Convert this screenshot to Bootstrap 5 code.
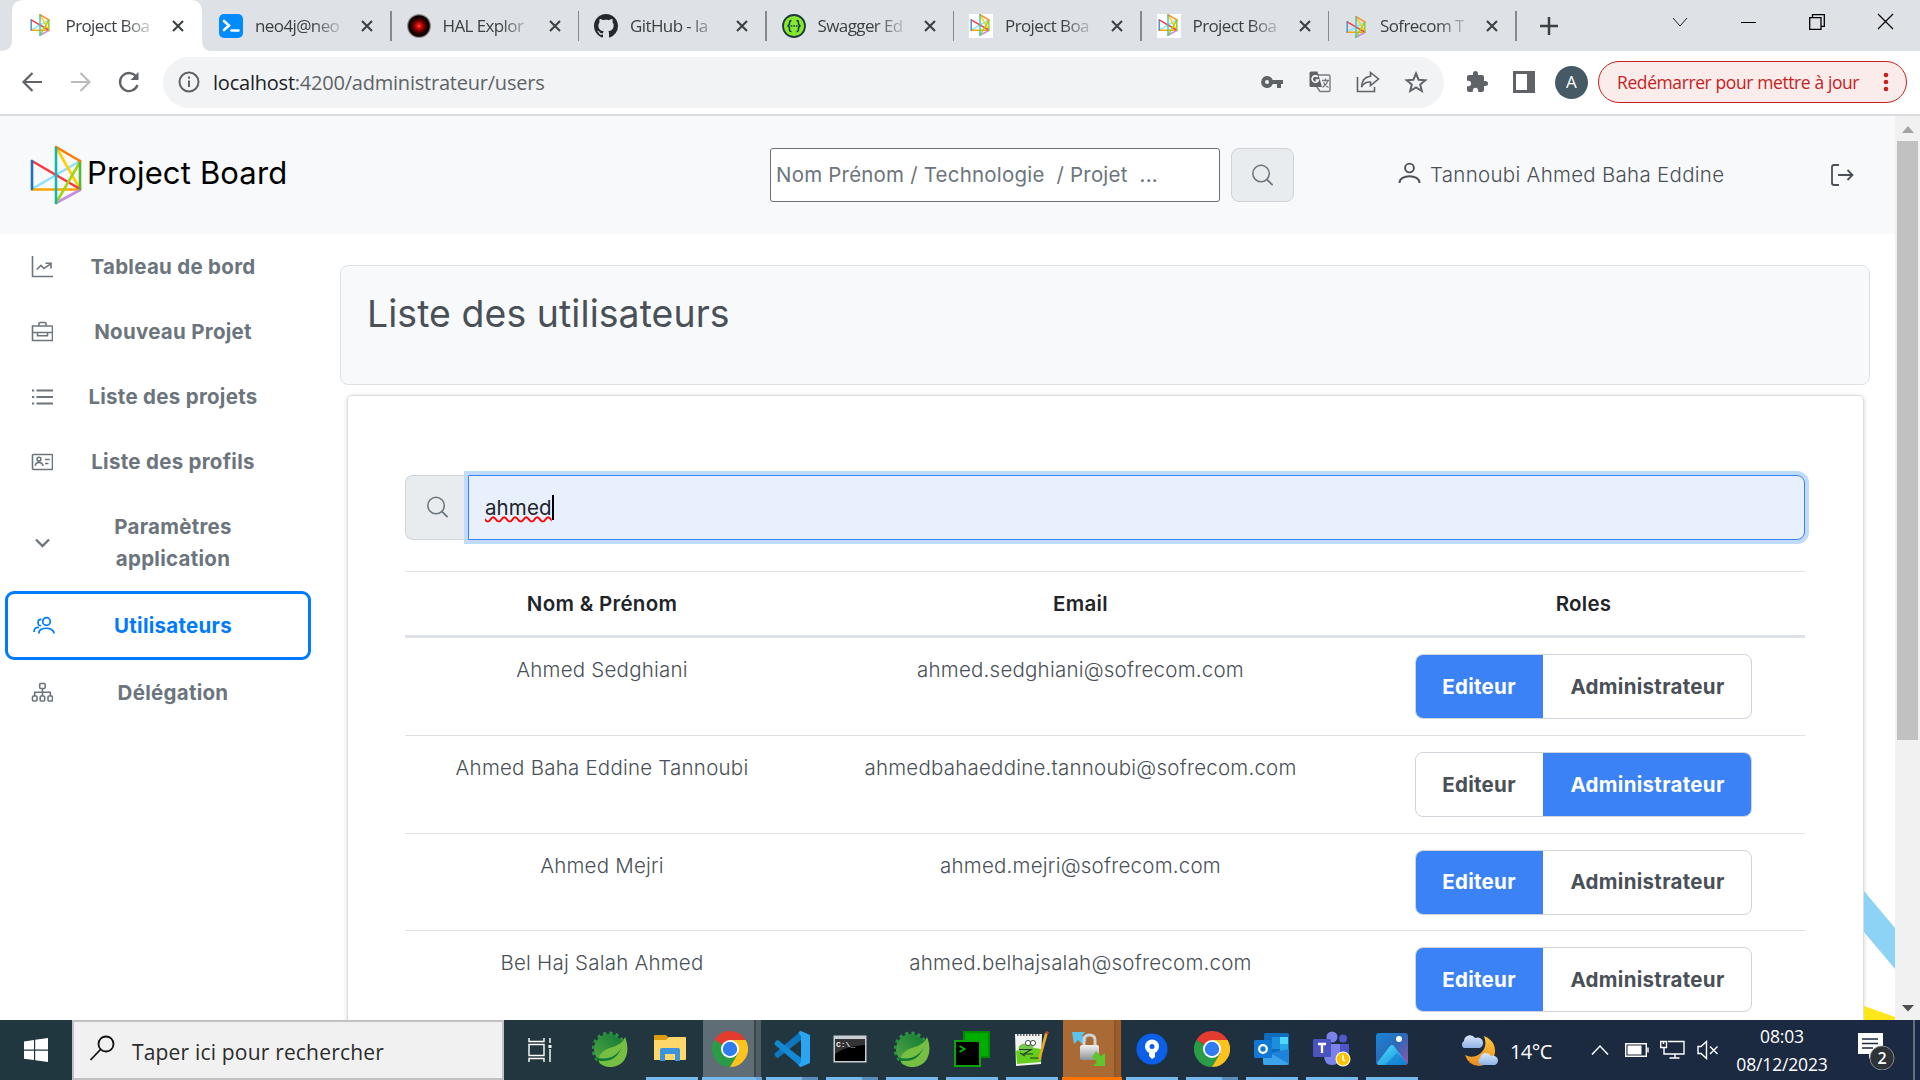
<!DOCTYPE html>
<html lang="fr">
<head>
<meta charset="utf-8">
<title>Project Board</title>
<link rel="stylesheet" href="https://cdn.jsdelivr.net/npm/bootstrap@5.3.0/dist/css/bootstrap.min.css">
<style>
html,body{width:1920px;height:1080px;overflow:hidden}
body{font-family:Inter,"Liberation Sans",sans-serif;font-size:20.5px;letter-spacing:.28px;line-height:32px;color:#212529;background:#fff}
svg{display:block;flex:none}
.sys{font-family:"Open Sans","Noto Sans",sans-serif}
/* browser chrome */
.tabstrip{height:51px;background:#dee1e6;padding-left:15.5px}
.tab-item{width:187.5px;height:51px;padding-left:16px;font-size:17px;letter-spacing:-.6px;color:#3c4043;position:relative}
.tab-item .fav{width:24px;margin-right:12px}
.tab-item .lbl{width:88px;white-space:nowrap;-webkit-mask-image:linear-gradient(90deg,#000 65%,rgba(0,0,0,.12));mask-image:linear-gradient(90deg,#000 65%,rgba(0,0,0,.12))}
.tab-item .x{margin-left:18px}
.tab-item.front{padding-left:12px}
.tab-item.front .fav{margin-right:14px}
.tab-item.sep::after{content:"";position:absolute;right:-1px;top:11px;width:1.5px;height:30px;background:#868a8f}
.tab-item>*{position:relative}
.tab-shape{position:absolute!important;left:-16px;top:0}
.winctl{padding-right:26px;gap:52px;height:43px}
.toolbar-row{height:65px;border-bottom:2px solid #dadce0;padding:6px 11px 7px 20px;background:#fff}
.omni{width:1281px;height:51px;margin-left:21px;border-radius:26px;background:#f1f3f4;padding:0 16px 0 15px;font-size:20px;letter-spacing:-.22px;color:#5f6368}
.omni b{font-weight:400;color:#202124}
.omni .addr{margin-left:13px;padding-top:2px}
.avatar-a{width:33px;height:33px;background:#455a64;color:#fff;font-size:17px;margin-left:20px}
.update-pill{width:309px;height:42px;border:1.5px solid #c5221f;border-radius:21px;background:#faeceb;color:#c5221f;font-size:17.5px;letter-spacing:-.4px;margin-left:10px;padding:0 17px 0 18px;white-space:nowrap}
/* application */
.viewport-area{height:904px;overflow:hidden}
.app-body{width:1895px;height:904px;overflow:hidden;position:relative}
.app-head{height:118px;background:#f8f9fb;padding-left:29px;color:#495057}
.brand-name{font-size:31px;color:#000;letter-spacing:.15px;margin-left:4px;width:200px;white-space:nowrap;margin-top:-5px}
.head-input{width:450px;height:54px;border:1px solid #6d6f75;border-radius:3px;font-size:20.5px;letter-spacing:.2px;color:#6c757d;padding:0 5px 1px;background:#fff;margin-left:483px;outline:0}
.head-input::placeholder{color:#6c757d;opacity:1}
.head-btn{width:63px;height:54px;background:#e9ecef;border:1px solid #ced4da;border-radius:8px;margin-left:11px;padding:0}
.side{width:340px;padding-top:1px;font-weight:700;color:#6c757d;line-height:32px}
.side-item{padding:16px 0 17px 31px;min-height:65px}
.side-item .t{width:190px;margin-left:25px;text-align:center}
.side-item.on{border:3px solid #007bff;border-radius:9px;margin:-1px 29px 1px 5px;padding:16px 0 15px 25px;min-height:69px;color:#007bff}
.side-item.on .t{margin-left:23px;margin-right:2px}
.panel-title{width:1530px;height:120px;margin-top:31px;background:#f8f9fb;border:1px solid #dee2e6;border-radius:8px;padding:30px 26px;font-size:37.4px;letter-spacing:.08px;line-height:36px;color:#495057}
.panel-card{width:1517px;height:760px;margin:10px 0 0 7px;border:1px solid #dcdee0;border-radius:5px;background:#fff;box-shadow:0 1px 5px rgba(0,0,0,.16);padding:79px 58px 0 57px}
.find-icon{width:63px;height:65px;background:#e9ecef;border:1px solid #ced4da;border-right:0;border-radius:8px 0 0 8px;padding-left:20px}
.find-box{height:65px;border:1px solid #3b82f6;border-radius:0 8px 8px 0;background:#e8f0fe;box-shadow:0 0 0 4px #bfdbfe;padding-left:16px;color:#212529}
.find-box .word{letter-spacing:.1px;text-decoration:underline wavy #f00 1.5px;text-underline-offset:1px;text-decoration-skip-ink:none}
.caret{width:2px;height:25px;background:#000}
.users{width:1400px;margin-top:31px;border-top:1px solid #dee2e6;table-layout:fixed;text-align:center}
.users thead th{height:65px;padding:0;border-bottom:3px solid #dee2e6;font-weight:600;color:#212529;vertical-align:middle}
.users td{height:97.5px;padding:16px 0 0;border-bottom:1px solid #dee2e6;vertical-align:top;color:#495057;letter-spacing:.22px}
.users tbody tr:first-child td{height:99px}
.users td,.user-name{font-weight:350}
.roles{width:337px;height:65px;margin:0 auto;border-radius:8px;overflow:hidden;border:1px solid #ced4da;font-weight:700;letter-spacing:.3px;color:#495057}
.roles span{display:flex;align-items:center;justify-content:center;height:65px;margin-top:-1px}
.roles .e{width:128px;margin-left:-1px}.roles .a{flex:1;margin-right:-1px}
.roles .sel{background:#3b82f6;color:#fff}
.deco{position:absolute;right:0;bottom:0}
.scroller{width:25px;background:#f1f1f1;padding-top:10px}
.scroller .thumb{width:21px;height:599px;background:#c1c1c1;margin-top:8px}
/* taskbar */
.taskbar-os{height:60px;background:linear-gradient(90deg,#213740,#22363f 50%,#1c2b3f 75%,#1b2942);color:#fff;letter-spacing:0}
.os-search{width:432px;height:60px;background:#f1f1f1;border:2px solid #c2c2c2;padding-left:15px;font-size:21px;letter-spacing:.18px;color:#2b2b2b}
.slot{width:60px;height:60px;border-bottom:3px solid transparent;background-clip:padding-box}
.slot.run{border-image:linear-gradient(90deg,transparent 7px,#76b9ed 7px 53px,transparent 53px) 3;border-image-width:0 0 3px 0}
.slot.many{border-image:linear-gradient(90deg,transparent 7px,#76b9ed 7px 39px,#5a8fbd 39px 53px,transparent 53px) 3;border-image-width:0 0 3px 0}
.slot.act{background:linear-gradient(90deg,transparent 1px,#5f6d76 1px 52px,#3a474f 52px 54px,#505d66 54px 59px,transparent 59px);border-image:linear-gradient(90deg,transparent 1px,#76b9ed 1px 52px,#6aa5d6 52px 59px,transparent 59px) 3;border-image-width:0 0 3px 0}
.slot.warn{background:linear-gradient(90deg,transparent 1px,#a96a35 1px 52px,#8e5526 52px 54px,#9c5d2a 54px 59px,transparent 59px);border-image:linear-gradient(90deg,transparent 1px,#ff7300 1px 59px,transparent 59px) 3;border-image-width:0 0 3px 0}
.slot.shift{position:relative;left:-1px}
.clock{width:96px;font-size:17.5px;letter-spacing:-.15px;line-height:28px;text-align:center;white-space:nowrap}
.temp{font-size:20px;letter-spacing:-.6px;width:42px;margin-left:12px;padding-top:3px}
</style>
<script src="https://cdn.jsdelivr.net/npm/bootstrap@5.3.0/dist/js/bootstrap.bundle.min.js"></script>
</head>
<body>
<svg width="0" height="0" class="position-absolute">
<defs>
<linearGradient id="gSpring" x1="0" y1="1" x2="1" y2="0"><stop offset="0" stop-color="#5aa845"/><stop offset="1" stop-color="#0b7a33"/></linearGradient>
<linearGradient id="gPhoto" x1="0" y1="0" x2="1" y2="1"><stop offset="0" stop-color="#1687d9"/><stop offset=".5" stop-color="#2d69b8"/><stop offset="1" stop-color="#9a52a8"/></linearGradient>
<linearGradient id="gMount" x1="0" y1="0" x2="1" y2="1"><stop offset="0" stop-color="#4fe0ff"/><stop offset="1" stop-color="#1386d8"/></linearGradient>
<linearGradient id="gMoon" x1="0" y1="0" x2="0" y2="1"><stop offset="0" stop-color="#ffc93c"/><stop offset="1" stop-color="#e88a22"/></linearGradient>
<linearGradient id="gCloud" x1="0" y1="0" x2="0" y2="1"><stop offset="0" stop-color="#dbe8fa"/><stop offset="1" stop-color="#8fb2e6"/></linearGradient>
<radialGradient id="gHal"><stop offset="0" stop-color="#ff7a30"/><stop offset=".15" stop-color="#f01010"/><stop offset=".5" stop-color="#6a0000"/><stop offset=".8" stop-color="#100"/></radialGradient>
<linearGradient id="gLock" x1="0" y1="0" x2="0" y2="1"><stop offset="0" stop-color="#f2f2f2"/><stop offset="1" stop-color="#8d9296"/></linearGradient>
<symbol id="logo" viewBox="0 0 54 60"><g fill="none" stroke-width="2.6" stroke-linecap="round"><path stroke="#8ee0fb" d="M3 44 51 16"/><path stroke="#ffd000" d="M27 2 51 44"/><path stroke="#ffa400" d="M3 44.500H51"/><path stroke="#fb3640" d="M3 16 51 44"/><path stroke="#c78ce6" d="M27 58 51 45"/><path stroke="#a3d311" d="M27 58 51 17"/><path stroke="#56b82c" d="M51 16V44"/><path stroke="#ff7a00" d="M27 2 51 16"/><path stroke="#12b8ac" d="M27 3V58"/><path stroke="#1d70b7" d="M3 16V44"/></g></symbol>
<symbol id="logoS" viewBox="0 0 54 60"><g fill="none" stroke-width="4" stroke-linecap="round"><path stroke="#8ee0fb" d="M3 44 51 16"/><path stroke="#ffd000" d="M27 2 51 44"/><path stroke="#ffa400" d="M3 44.500H51"/><path stroke="#fb3640" d="M3 16 51 44"/><path stroke="#c78ce6" d="M27 58 51 45"/><path stroke="#a3d311" d="M27 58 51 17"/><path stroke="#8cc83c" d="M51 16V44"/><path stroke="#ff8a2a" d="M27 2 51 16"/><path stroke="#3cc8b0" d="M27 3V58"/><path stroke="#4a90cc" d="M3 16V44"/></g></symbol>
<symbol id="xx" viewBox="0 0 12 12"><path d="M1 1 11 11M11 1 1 11" stroke="#3c4043" stroke-width="2.1"/></symbol>
<symbol id="mag" viewBox="0 0 24 24"><circle cx="10.500" cy="10" r="8.600" fill="none" stroke="#6c757d" stroke-width="1.600"/><path d="M16.700 16.200 22 21.500" stroke="#6c757d" stroke-width="1.900" stroke-linecap="round"/></symbol>
<symbol id="spring" viewBox="0 0 36 36"><circle cx="17" cy="18" r="15" fill="url(#gSpring)"/><circle cx="17" cy="18" r="15.800" fill="none" stroke="#2c9440" stroke-width="3.200" stroke-dasharray="3.100 3.100"/><path d="M33 6C38 18 36 34 20 36 14 36.500 9 34 7 31 5 23 13 18 21 16 27 14 31 11 33 6Z" fill="#77bf43"/><path d="M3 26C14 30 26 26 30 15 27 25 20 31 9 30 6 30 4 28 3 26Z" fill="#0d7a34"/></symbol>
<symbol id="chrome" viewBox="0 0 36 36"><path d="M18 18 2.400 9A18 18 0 0 1 33.600 9Z" fill="#e33b2e"/><path d="M18 18 2.400 9A18 18 0 0 0 18 36L26 22.500Z" fill="#2a9c48"/><path d="M18 9H33.600A18 18 0 0 1 18 36L26 22.500Z" fill="#fcc31e"/><circle cx="18" cy="18" r="9" fill="#fff"/><circle cx="18" cy="18" r="7.200" fill="#2f7bf0"/></symbol>
</defs>
</svg>

<header class="sys">
 <div class="tabstrip d-flex">
  <div class="tab-item front d-flex align-items-center">
   <svg class="tab-shape" width="210" height="51"><path d="M0 51C9 51 12 47 12 39V12C12 4 16 0 24 0H190C198 0 202 4 202 12V39C202 47 205 51 212 51Z" fill="#fff"/></svg>
   <svg class="fav" height="24"><use href="#logoS" height="22"/></svg><span class="lbl">Project Boa</span><svg class="x" width="12" height="12"><use href="#xx"/></svg></div>
  <div class="tab-item sep d-flex align-items-center"><svg class="fav" width="24" height="24" viewBox="0 0 24 24"><rect width="24" height="24" rx="5" fill="#018bff"/><path d="M5 7 10 11.500 5 16M12.500 16.500H19.500" fill="none" stroke="#fff" stroke-width="2.600" stroke-linecap="round"/></svg><span class="lbl">neo4j@neo</span><svg class="x" width="12" height="12"><use href="#xx"/></svg></div>
  <div class="tab-item sep d-flex align-items-center"><svg class="fav" width="24" height="24"><circle cx="12" cy="12" r="12" fill="#8c8c8c"/><circle cx="12" cy="12" r="10.800" fill="url(#gHal)"/></svg><span class="lbl">HAL Explor</span><svg class="x" width="12" height="12"><use href="#xx"/></svg></div>
  <div class="tab-item sep d-flex align-items-center"><svg class="fav" width="24" height="24" viewBox="0 0 16 16"><path fill="#24292f" d="M8 0C3.580 0 0 3.580 0 8c0 3.540 2.290 6.530 5.470 7.590.4.070.55-.17.55-.38 0-.19-.01-.82-.01-1.490-2.010.37-2.530-.49-2.690-.94-.09-.23-.48-.94-.82-1.130-.28-.15-.68-.52-.01-.53.63-.01 1.080.58 1.230.82.72 1.210 1.870.87 2.330.66.070-.52.28-.87.51-1.070-1.780-.2-3.640-.89-3.640-3.950 0-.87.31-1.590.82-2.150-.08-.2-.36-1.020.08-2.120 0 0 .67-.21 2.200.82.64-.18 1.320-.27 2-.27s1.360.09 2 .27c1.530-1.040 2.200-.82 2.200-.82.44 1.100.16 1.920.08 2.120.51.56.82 1.270.82 2.150 0 3.070-1.870 3.750-3.650 3.950.29.25.54.73.54 1.480 0 1.070-.01 1.930-.01 2.200 0 .21.15.46.55.38A8 8 0 0 0 16 8c0-4.420-3.580-8-8-8"/></svg><span class="lbl">GitHub - la</span><svg class="x" width="12" height="12"><use href="#xx"/></svg></div>
  <div class="tab-item sep d-flex align-items-center"><svg class="fav" width="24" height="24"><circle cx="12" cy="12" r="11" fill="#85ea2d" stroke="#1d3a3f" stroke-width="1.800"/><path d="M9.500 6.500Q7.500 6.500 7.500 9T5.500 12Q7.500 12 7.500 15T9.500 17.500M14.500 6.500Q16.500 6.500 16.500 9T18.500 12Q16.500 12 16.500 15T14.500 17.500" fill="none" stroke="#173647" stroke-width="1.500"/><path d="M8.700 12H15.500" stroke="#173647" stroke-width="1.600" stroke-dasharray="1.600 1"/></svg><span class="lbl">Swagger Ed</span><svg class="x" width="12" height="12"><use href="#xx"/></svg></div>
  <div class="tab-item sep d-flex align-items-center"><svg class="fav bg-white" height="24"><use href="#logoS" x="-1" height="22"/></svg><span class="lbl">Project Boa</span><svg class="x" width="12" height="12"><use href="#xx"/></svg></div>
  <div class="tab-item sep d-flex align-items-center"><svg class="fav bg-white" height="24"><use href="#logoS" x="-1" height="22"/></svg><span class="lbl">Project Boa</span><svg class="x" width="12" height="12"><use href="#xx"/></svg></div>
  <div class="tab-item sep d-flex align-items-center"><svg class="fav" height="24"><use href="#logoS" y="2" height="22"/></svg><span class="lbl">Sofrecom T</span><svg class="x" width="12" height="12"><use href="#xx"/></svg></div>
  <svg class="align-self-center ms-4" width="18" height="18" viewBox="0 0 18 18"><path d="M9 0V18M0 9H18" stroke="#3c4043" stroke-width="2.500"/></svg>
  <div class="winctl d-flex align-items-center ms-auto">
   <svg width="16" height="16" fill="none" stroke="#222"><path d="M0 4 7 12 14 4"/></svg>
   <svg width="16" height="16" stroke="#000"><path d="M0 8.500H15"/></svg>
   <svg width="16" height="16" fill="none" stroke="#000" stroke-width="1.300"><path d="M.7 3.700H12V15.300H.7ZM3.500 3.500V.7H15.300V12.300H12.500"/></svg>
   <svg width="17" height="17" stroke="#000" stroke-width="1.200"><path d="M1 1 16 16M16 1 1 16"/></svg>
  </div>
 </div>
 <div class="toolbar-row d-flex align-items-center">
  <div class="d-flex align-items-center" style="gap:25px">
   <svg width="24" height="24" fill="none" stroke="#5f6368" stroke-width="2.200"><path d="M22 12H4M12.500 3 3.500 12 12.500 21"/></svg>
   <svg width="24" height="24" fill="none" stroke="#babcbe" stroke-width="2.200"><path d="M2 12H20M11.500 3 20.500 12 11.500 21"/></svg>
   <svg width="24" height="24" fill="none" stroke="#5f6368" stroke-width="2.300"><path d="M18.500 7A9 9 0 1 0 19.500 15"/><path d="M20.500 2V10H12.500Z" fill="#5f6368" stroke="none"/></svg>
  </div>
  <div class="omni d-flex align-items-center">
   <svg width="22" height="22" fill="none" stroke="#5f6368" stroke-width="2"><circle cx="11" cy="11" r="9.500"/><path d="M11 9.500V16M11 5.500V7.800"/></svg>
   <span class="addr text-nowrap"><b>localhost</b>:4200/administrateur/users</span>
   <div class="ms-auto d-flex align-items-center" style="gap:24px">
    <svg width="24" height="24" viewBox="0 0 24 24" fill="#5f6368"><path fill-rule="evenodd" d="M12.700 10A6 6 0 1 0 12.700 14H17V18H21V14H23V10ZM7 14A2 2 0 1 1 7 10 2 2 0 0 1 7 14Z"/></svg>
    <svg width="24" height="24"><path d="M9 5H20.500Q22 5 22 6.500V20Q22 21.500 20.500 21.500H12L9 17" fill="none" stroke="#777b7f" stroke-width="1.400"/><path d="M3 1.500H9.500L14 17H3Q1.500 17 1.500 15.500V3Q1.500 1.500 3 1.500Z" fill="#5f6368"/><path d="M9.800 7A3.200 3.200 0 1 0 10.400 10H7.600" fill="none" stroke="#fff" stroke-width="1.600"/><path d="M14 10.500H21M17.500 8.500V10.500M20 10.500Q18.500 15 14.500 17.500M15.500 12.500Q17 15.500 20.500 17.500" fill="none" stroke="#777b7f" stroke-width="1.300"/></svg>
    <svg width="24" height="24" fill="none" stroke="#5f6368" stroke-width="1.600"><path d="M1.500 7V21.500H18.500V17"/><path d="M14.500 2.500 22.500 9 14.500 15.500V12Q8.500 11.500 5.500 17 6 7 14.500 6.200Z"/></svg>
    <svg width="24" height="24" fill="none" stroke="#5f6368" stroke-width="2"><path d="M12 3.500 14.600 9.700 21.300 10.200 16.200 14.600 17.800 21 12 17.500 6.200 21 7.800 14.600 2.700 10.200 9.400 9.700Z"/></svg>
   </div>
  </div>
  <svg style="margin-left:21px" width="24" height="24" viewBox="0 0 24 24" fill="#5f6368"><path d="M20.500 11H19V7c0-1.100-.9-2-2-2h-4V3.500a2.500 2.500 0 0 0-5 0V5H4c-1.100 0-1.990.9-1.990 2v3.800H3.500c1.490 0 2.700 1.210 2.700 2.700s-1.210 2.700-2.700 2.700H2V20c0 1.100.9 2 2 2h3.800v-1.500c0-1.490 1.210-2.700 2.700-2.700s2.700 1.210 2.700 2.700V22H17c1.100 0 2-.9 2-2v-4h1.500a2.500 2.500 0 0 0 0-5z"/></svg>
  <svg style="margin-left:24px" width="22" height="22"><path fill="#5f6368" fill-rule="evenodd" d="M0 0H22V22H0ZM3 3V19H14V3Z"/></svg>
  <div class="avatar-a rounded-circle d-flex align-items-center justify-content-center">A</div>
  <div class="update-pill d-flex align-items-center justify-content-between"><span>Redémarrer pour mettre à jour</span><svg width="6" height="20" fill="#c5221f"><circle cx="3" cy="3" r="2.300"/><circle cx="3" cy="10" r="2.300"/><circle cx="3" cy="17" r="2.300"/></svg></div>
 </div>
</header>

<div class="viewport-area d-flex">
 <div class="app-body">
  <svg class="deco" width="31" height="140"><path d="M0 11 31 48V89L0 52Z" fill="#8dd3f5"/><path d="M0 126 31 137V140H0Z" fill="#ffe617"/></svg>
  <nav class="app-head d-flex align-items-center">
   <svg width="54" height="60"><use href="#logo"/></svg>
   <span class="brand-name">Project Board</span>
   <input class="head-input" placeholder="Nom Prénom / Technologie  / Projet  ...">
   <button class="head-btn d-flex align-items-center justify-content-center"><svg width="23" height="23"><use href="#mag"/></svg></button>
   <svg style="margin-left:104px;margin-top:-4px" width="23" height="22" fill="none" stroke="#495057" stroke-width="1.900"><circle cx="11.500" cy="6" r="4.400"/><path d="M1.500 21C1.500 12 21.500 12 21.500 21"/></svg>
   <span class="user-name text-nowrap" style="margin-left:9px;width:400px">Tannoubi Ahmed Baha Eddine</span>
   <svg width="24" height="24" fill="none" stroke="#495057" stroke-width="1.800"><path d="M9 2H4Q2 2 2 4V20Q2 22 4 22H9M8 12H22M17.500 7 22.500 12 17.500 17"/></svg>
  </nav>
  <div class="d-flex">
   <aside class="side">
    <div class="side-item d-flex align-items-center"><svg width="22" height="22" fill="none" stroke="#6c757d" stroke-width="1.600"><path d="M1.500 0V20.500H22M5.700 13.500 10 9.500 12.800 12.500 19.800 7.800M14.500 7.300H20V12.500"/></svg><span class="t">Tableau de bord</span></div>
    <div class="side-item d-flex align-items-center"><svg width="22" height="22" fill="none" stroke="#6c757d" stroke-width="1.600"><path d="M1.500 5H20.500Q21.500 5 21.500 6V19.500H1.500V5ZM8 5V2.500Q8 1.500 9 1.500H14Q15 1.500 15 2.500V5M1.500 11.500H21.500M6.500 11.500V14.800H16.500V11.500"/></svg><span class="t">Nouveau Projet</span></div>
    <div class="side-item d-flex align-items-center"><svg width="22" height="22" stroke="#6c757d" stroke-width="2"><path d="M5.500 4.500H22M5.500 11H22M5.500 17.500H22M1 4.500H3.200M1 11H3.200M1 17.500H3.200"/></svg><span class="t">Liste des projets</span></div>
    <div class="side-item d-flex align-items-center"><svg width="22" height="22" fill="none" stroke="#6c757d" stroke-width="1.600"><rect x="1.500" y="3.500" width="20" height="15" rx="1"/><circle cx="8" cy="8.200" r="1.900"/><path d="M4.300 14.800Q4.500 11.500 8 11.500T12 14.800M14 8.500H18.700M14 12.500H17.500"/></svg><span class="t">Liste des profils</span></div>
    <div class="side-item d-flex align-items-center"><svg width="22" height="22" fill="none" stroke="#6c757d" stroke-width="2.300"><path d="M5 7.500 11.500 14 18 7.500"/></svg><span class="t">Paramètres application</span></div>
    <div class="side-item on d-flex align-items-center"><svg width="22" height="22" fill="none" stroke="#007bff" stroke-width="1.700"><circle cx="13.500" cy="6.500" r="3.800"/><path d="M6 18.500C5 11.500 21 11.500 21 18.500M8.500 4.500Q5 4 5 7.500T8 10.500M1 17Q1 12 6 12.500"/></svg><span class="t">Utilisateurs</span></div>
    <div class="side-item d-flex align-items-center"><svg width="22" height="22" fill="none" stroke="#6c757d" stroke-width="1.600"><rect x="8.700" y="1.500" width="5.500" height="5" rx="1"/><rect x="1.500" y="14" width="4.500" height="5" rx="1"/><rect x="9.200" y="14" width="4.500" height="5" rx="1"/><rect x="17" y="14" width="4.500" height="5" rx="1"/><path d="M11.500 6.500V14M3.700 14V10.300H19.300V14"/></svg><span class="t">Délégation</span></div>
   </aside>
   <main>
    <div class="panel-title">Liste des utilisateurs</div>
    <div class="panel-card">
     <div class="d-flex">
      <div class="find-icon d-flex align-items-center"><svg width="23" height="23"><use href="#mag"/></svg></div>
      <div class="find-box flex-fill d-flex align-items-center"><span class="word">ahmed</span><span class="caret"></span></div>
     </div>
     <table class="users">
      <colgroup><col style="width:394px"><col style="width:563px"><col style="width:443px"></colgroup>
      <thead><tr><th>Nom &amp; Prénom</th><th>Email</th><th>Roles</th></tr></thead>
      <tbody>
       <tr><td>Ahmed Sedghiani</td><td>ahmed.sedghiani@sofrecom.com</td><td><div class="roles d-flex"><span class="e sel">Editeur</span><span class="a">Administrateur</span></div></td></tr>
       <tr><td>Ahmed Baha Eddine Tannoubi</td><td>ahmedbahaeddine.tannoubi@sofrecom.com</td><td><div class="roles d-flex"><span class="e">Editeur</span><span class="a sel">Administrateur</span></div></td></tr>
       <tr><td>Ahmed Mejri</td><td>ahmed.mejri@sofrecom.com</td><td><div class="roles d-flex"><span class="e sel">Editeur</span><span class="a">Administrateur</span></div></td></tr>
       <tr><td>Bel Haj Salah Ahmed</td><td>ahmed.belhajsalah@sofrecom.com</td><td><div class="roles d-flex"><span class="e sel">Editeur</span><span class="a">Administrateur</span></div></td></tr>
      </tbody>
     </table>
    </div>
   </main>
  </div>
 </div>
 <div class="scroller d-flex flex-column align-items-center">
  <svg width="12" height="7"><path d="M0 7 6 0 12 7Z" fill="#a3a3a3"/></svg>
  <div class="thumb"></div>
  <svg class="mt-auto mb-2" width="12" height="7"><path d="M0 0 6 6.500 12 0Z" fill="#505050"/></svg>
 </div>
</div>

<footer class="taskbar-os sys d-flex align-items-center">
 <div style="width:72px;padding-left:24px"><svg width="24" height="24" fill="#fff"><path d="M0 3.500 10 2V11.500H0ZM11.200 1.800 24 0V11.500H11.200ZM0 12.700H10V22L0 20.800ZM11.200 12.700H24V24L11.200 22.200Z"/></svg></div>
 <div class="os-search d-flex align-items-center"><svg width="26" height="26" fill="none" stroke="#111" stroke-width="1.800" style="margin-top:-4px"><circle cx="17" cy="9" r="7.500"/><path d="M11.500 14.500 1.500 25"/></svg><span style="margin-left:17px;padding-top:3px">Taper ici pour rechercher</span></div>
 <div class="d-flex align-items-center" style="width:78px;padding-left:24px"><svg width="24" height="24" fill="none" stroke="#fff" stroke-width="1.400"><path d="M1 0V3.500H16V0M1 6.500H16V17.500H1ZM1 24V20.500H16V24M22 0V5M22 11V24"/><path d="M20.500 7H23.500V10H20.500Z" fill="#fff" stroke="none"/></svg></div>
 <div class="slot d-flex align-items-center justify-content-center pe-1"><svg width="36" height="36"><use href="#spring"/></svg></div>
 <div class="slot run d-flex align-items-center justify-content-center pe-1"><svg width="32" height="30"><path d="M0 2Q0 1 1 1H12L15 4V8H0Z" fill="#dd9b12"/><path d="M0 6H12L15 3H31Q32 3 32 4V25Q32 26 31 26H0Z" fill="#ffd76a"/><path d="M6 27V16Q6 14 8 14H24Q26 14 26 16V27H21V20H11V27Z" fill="#3b94dc"/></svg></div>
 <div class="slot act d-flex align-items-center justify-content-center pe-1"><svg width="36" height="36"><use href="#chrome"/></svg></div>
 <div class="slot many d-flex align-items-center justify-content-center"><svg width="36" height="36"><path d="M27 0 27 9 4 27Q2 27 .5 24 .5 23 1 22Z" fill="#0f76bd"/><path d="M27 36 27 27 4 9Q2 9 .5 12 .5 13 1 14Z" fill="#1389d3"/><path d="M27 0 36 4V32L27 36Q25 36 24.500 34L27 31V5L24.500 2Q25 0 27 0Z" fill="#2aa5f2"/></svg></div>
 <div class="slot many d-flex align-items-center justify-content-center pe-1"><svg width="34" height="28"><rect x=".5" y=".5" width="33" height="27" fill="#c9ced2"/><rect x="2" y="4" width="30" height="22" fill="#000"/><path d="M2 4H32V10Q12 11 2 19Z" fill="#333"/><text x="3" y="11.500" font-family="Liberation Mono" font-weight="700" font-size="8" fill="#eee">C:\_</text></svg></div>
 <div class="slot run d-flex align-items-center justify-content-center"><svg width="36" height="36"><use href="#spring"/></svg></div>
 <div class="slot run d-flex align-items-center justify-content-center"><svg width="36" height="36"><rect x="10" y="1" width="25" height="25" fill="#00ae00" stroke="#008c00" stroke-width="2"/><rect x="1" y="10" width="25" height="25" fill="#000" stroke="#0aa30a" stroke-width="2"/><path d="M5.500 15 10.500 18 5.500 21" fill="none" stroke="#0b0" stroke-width="1.800"/></svg></div>
 <div class="slot run d-flex align-items-center justify-content-center"><svg width="36" height="36"><path d="M1 3H28L27 33 2 35Z" fill="#f1f3ee"/><path d="M2 20Q14 15 27 18V31L3 33Z" fill="#64cf1c"/><ellipse cx="12" cy="17" rx="7.500" ry="4.500" fill="#73c74a"/><circle cx="14" cy="12" r="2.600" fill="#fff" stroke="#222" stroke-width=".8"/><circle cx="19" cy="12" r="2.600" fill="#fff" stroke="#222" stroke-width=".8"/><path d="M5 18.500H17L10 23H19M16 27H25M6 22 11 25" stroke="#223d17" stroke-width="1.200" fill="none"/><path d="M3 4H27" stroke="#666" stroke-width="2" stroke-dasharray="1.500 1.500"/><path d="M34 2 27 27 25 30 24.500 26 31 2Z" fill="#e9a825"/><path d="M31 2 32 0 35 1 34 4Z" fill="#b34a2e"/></svg></div>
 <div class="slot warn d-flex align-items-center justify-content-center pe-1"><svg width="36" height="36"><path d="M0 1H13L10 4.500 15 9 10 13 6 9 2 13Z" fill="#5ec3ea"/><path d="M12 15V9Q12 4 17.500 4T23 9V15" fill="none" stroke="#cfd3d5" stroke-width="3"/><rect x="8" y="14" width="19" height="15" rx="2" fill="url(#gLock)"/><path d="M24 20 29 25 33 22V35H21L25 31 20 26Z" fill="#5fc52d"/></svg></div>
 <div class="slot run d-flex align-items-center justify-content-center"><svg width="32" height="32"><circle cx="16" cy="16" r="15.500" fill="#0b5fe8"/><path d="M13 17.500V23L16 26 19 24V17.500Z" fill="#fff"/><circle cx="16" cy="13.500" r="7" fill="#fff"/><circle cx="16" cy="13.500" r="2.500" fill="#0b5fe8"/></svg></div>
 <div class="slot many d-flex align-items-center justify-content-center"><svg width="36" height="36"><use href="#chrome"/></svg></div>
 <div class="slot run d-flex align-items-center justify-content-center"><svg width="36" height="34"><rect x="10" y="1" width="25" height="26" rx="1.500" fill="#0f6cbd"/><rect x="18" y="5" width="8" height="12" fill="#1b8fdc"/><rect x="26" y="5" width="8" height="7" fill="#50d9ff"/><rect x="26" y="12" width="8" height="7" fill="#28a8ea"/><path d="M9 16 22 24 35 17V31Q35 33 33 33H11Q9 33 9 31Z" fill="#3ba3ea"/><path d="M35 17V32L16 21Z" fill="#1e83d8"/><rect y="8" width="18" height="18" rx="1.500" fill="#0f78d4"/><circle cx="9" cy="17" r="3.800" fill="none" stroke="#fff" stroke-width="2.300"/></svg></div>
 <div class="slot run d-flex align-items-center justify-content-center"><svg width="38" height="36"><circle cx="19" cy="6" r="5.500" fill="#7b83eb"/><circle cx="30" cy="7.500" r="4" fill="#5059c9"/><path d="M23 13H36V22Q36 29 29 29H23Z" fill="#4d56c6"/><path d="M11 13H27V24Q27 34 19 34T11 24Z" fill="#7b83eb"/><rect y="8" width="18" height="18" rx="1.500" fill="#4b53bc"/><path d="M5 13H13M9 13V22" stroke="#fff" stroke-width="2.300"/><circle cx="30" cy="28" r="7.500" fill="#fff"/><circle cx="30" cy="28" r="6.500" fill="#ffc400"/><path d="M30 24V28.500L32 30" fill="none" stroke="#fff" stroke-width="1.600"/></svg></div>
 <div class="slot run d-flex align-items-center justify-content-center"><svg width="32" height="32"><rect width="32" height="32" rx="3" fill="url(#gPhoto)"/><path d="M1 30 14 13Q16 11 18 13L31 30Q30 32 28 32H3Q1 32 1 30Z" fill="url(#gMount)"/><path d="M9 32 21 20 31 30Q30 32 28 32Z" fill="#1379cd" opacity=".6"/><circle cx="23" cy="6" r="3" fill="#fff"/></svg></div>
 <div class="d-flex align-items-center ms-auto">
  <svg width="37" height="34"><path d="M23 3Q28 17 15 23 9 25 4 22 8 33 18 33 31 32 34 20 35 8 23 3Z" fill="url(#gMoon)"/><path d="M3 15A4 4 0 0 1 3 8 6 6 0 0 1 14 5 5 5 0 0 1 19 15Z" fill="url(#gCloud)"/><path d="M20 32A4 4 0 0 1 19 25 6 6 0 0 1 30 23 4.500 4.500 0 0 1 34 32Z" fill="url(#gCloud)"/></svg>
  <span class="temp text-nowrap">14°C</span>
  <svg style="margin-left:39px" width="18" height="12" fill="none" stroke="#fff" stroke-width="1.500"><path d="M1 10.500 9 2 17 10.500"/></svg>
  <svg style="margin-left:16px" width="24" height="14"><path d="M.7.700H21.300V13.300H.7ZM23 4.500V9.500" fill="none" stroke="#fff" stroke-width="1.400"/><rect x="2.500" y="2.500" width="14" height="9" fill="#fff"/></svg>
  <svg style="margin-left:11px" width="25" height="20" fill="none" stroke="#fff" stroke-width="1.400"><path d="M8 1.500H24V14H4V8M15 14V17.500M9.500 18H19.500M.7 1.500H6.500V7.500H.7ZM3.500 1.500V4"/></svg>
  <svg style="margin-left:12px" width="22" height="20" fill="none" stroke="#fff" stroke-width="1.400"><path d="M1 6.500H4L9.500 1.500V18.500L4 13.500H1ZM13 6.500 20.500 14M20.500 6.500 13 14"/></svg>
  <div class="clock" style="margin-left:15px"><div>08:03</div><div>08/12/2023</div></div>
  <svg style="margin-left:27px" width="38" height="40" viewBox="0 0 38 40"><path d="M1 3H26V24H17L12 29V24H1Z" fill="#fff"/><path d="M5 9H21M5 13.500H21M5 18H16" stroke="#1c2b3f" stroke-width="1.500"/><circle cx="25" cy="28" r="12" fill="#2e3338" stroke="#84898f"/><text x="25" y="34" text-anchor="middle" font-family="Open Sans" font-weight="600" font-size="16" fill="#fff">2</text></svg>
  <div style="width:2px;height:60px;background:#66707c;margin:0 5px 0 18px"></div>
 </div>
</footer>
</body>
</html>
